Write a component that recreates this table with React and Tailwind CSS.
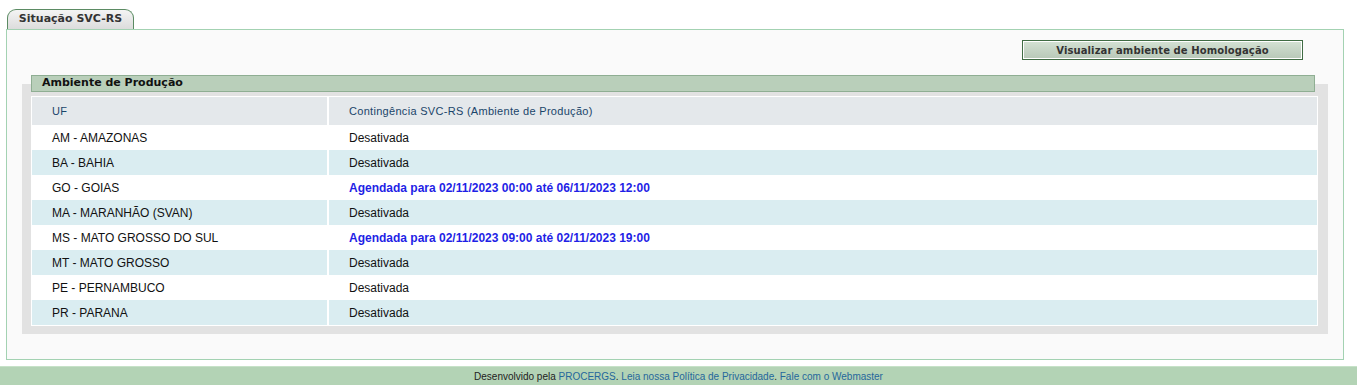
import React from 'react'

const rows = [
  { uf: 'AM - AMAZONAS', status: 'Desativada' },
  { uf: 'BA - BAHIA', status: 'Desativada' },
  { uf: 'GO - GOIAS', status: 'Agendada para 02/11/2023 00:00 até 06/11/2023 12:00', scheduled: true },
  { uf: 'MA - MARANHÃO (SVAN)', status: 'Desativada' },
  { uf: 'MS - MATO GROSSO DO SUL', status: 'Agendada para 02/11/2023 09:00 até 02/11/2023 19:00', scheduled: true },
  { uf: 'MT - MATO GROSSO', status: 'Desativada' },
  { uf: 'PE - PERNAMBUCO', status: 'Desativada' },
  { uf: 'PR - PARANA', status: 'Desativada' },
]

const verdana = { fontFamily: '"DejaVu Sans", Verdana, sans-serif' }

const App = () => {
  return (
    <div className="min-h-[385px] w-[1357px] bg-white flex flex-col" style={{ fontFamily: '"Liberation Sans", Arial, sans-serif' }}>
      <div className="pt-[9px] pl-[6px] pr-[13px]">
        {/* tab */}
        <div className="ml-[1px] flex">
          <div
            className="h-[20px] w-[127px] rounded-t-[9px] border border-b-0 border-[#5b8b63] bg-gradient-to-b from-[#f4f4f4] to-[#dcdcdc] flex items-center justify-center text-[11px] font-bold text-[#333]"
            style={verdana}
          >
            Situação SVC-RS
          </div>
        </div>

        {/* panel */}
        <div className="border border-[#a3d2b2] bg-[#fafafa] h-[331px] flex flex-col">
          <div className="flex justify-end pt-[10px] pr-[40px]">
            <button className="h-[20px] w-[281px] border border-[#3f6b43] p-0 bg-white">
              <div
                className="h-full w-full border border-white bg-gradient-to-b from-[#d2e0d2] to-[#b9c9b9] flex items-center justify-center text-[10px] font-bold text-[#333] tracking-[0.1px]"
                style={verdana}
              >
                Visualizar ambiente de Homologação
              </div>
            </button>
          </div>

          {/* section */}
          <div className="mt-[15px] ml-[15px] mr-[15px]">
            <div className="relative z-10 ml-[9px] mr-[13px] h-[17px] border border-[#8fae93] bg-[#b9cfba] flex items-center pl-[10px] text-[11px] font-bold text-[#111]" style={verdana}>
              Ambiente de Produção
            </div>
            <div className="-mt-[8px] bg-[#e2e2e2] pt-[12px] pl-[9px] pr-[10px] pb-[8px]">
              <div className="border border-white bg-white">
                <div className="flex h-[28px] bg-[#e4e8eb] text-[11px] tracking-[0.3px] text-[#1a456a]">
                  <div className="w-[297px] flex items-center pl-[20px] border-r-2 border-white">UF</div>
                  <div className="flex-1 flex items-center pl-[20px]">Contingência SVC-RS (Ambiente de Produção)</div>
                </div>
                {rows.map((r, i) => (
                  <div key={r.uf} className={`flex h-[25px] text-[12px] ${i % 2 === 1 ? 'bg-[#daedf1]' : 'bg-white'}`}>
                    <div className="w-[297px] flex items-center pl-[20px] border-r-2 border-white text-[#111]">{r.uf}</div>
                    <div className={`flex-1 flex items-center pl-[20px] ${r.scheduled ? 'font-bold text-[#1f1fe6]' : 'text-[#111]'}`}>
                      {r.status}
                    </div>
                  </div>
                ))}
              </div>
            </div>
          </div>
        </div>
      </div>

      {/* footer */}
      <div className="mt-[6px] h-[19px] border-t border-[#c6e2c8] bg-[#b3d3b5] flex items-center justify-center text-[10px] text-[#222]">
        <span>
          Desenvolvido pela <span className="text-[#25679b]">PROCERGS</span>. <span className="text-[#25679b]">Leia nossa Política de Privacidade</span>. <span className="text-[#25679b]">Fale com o Webmaster</span>
        </span>
      </div>
    </div>
  )
}

export default App
